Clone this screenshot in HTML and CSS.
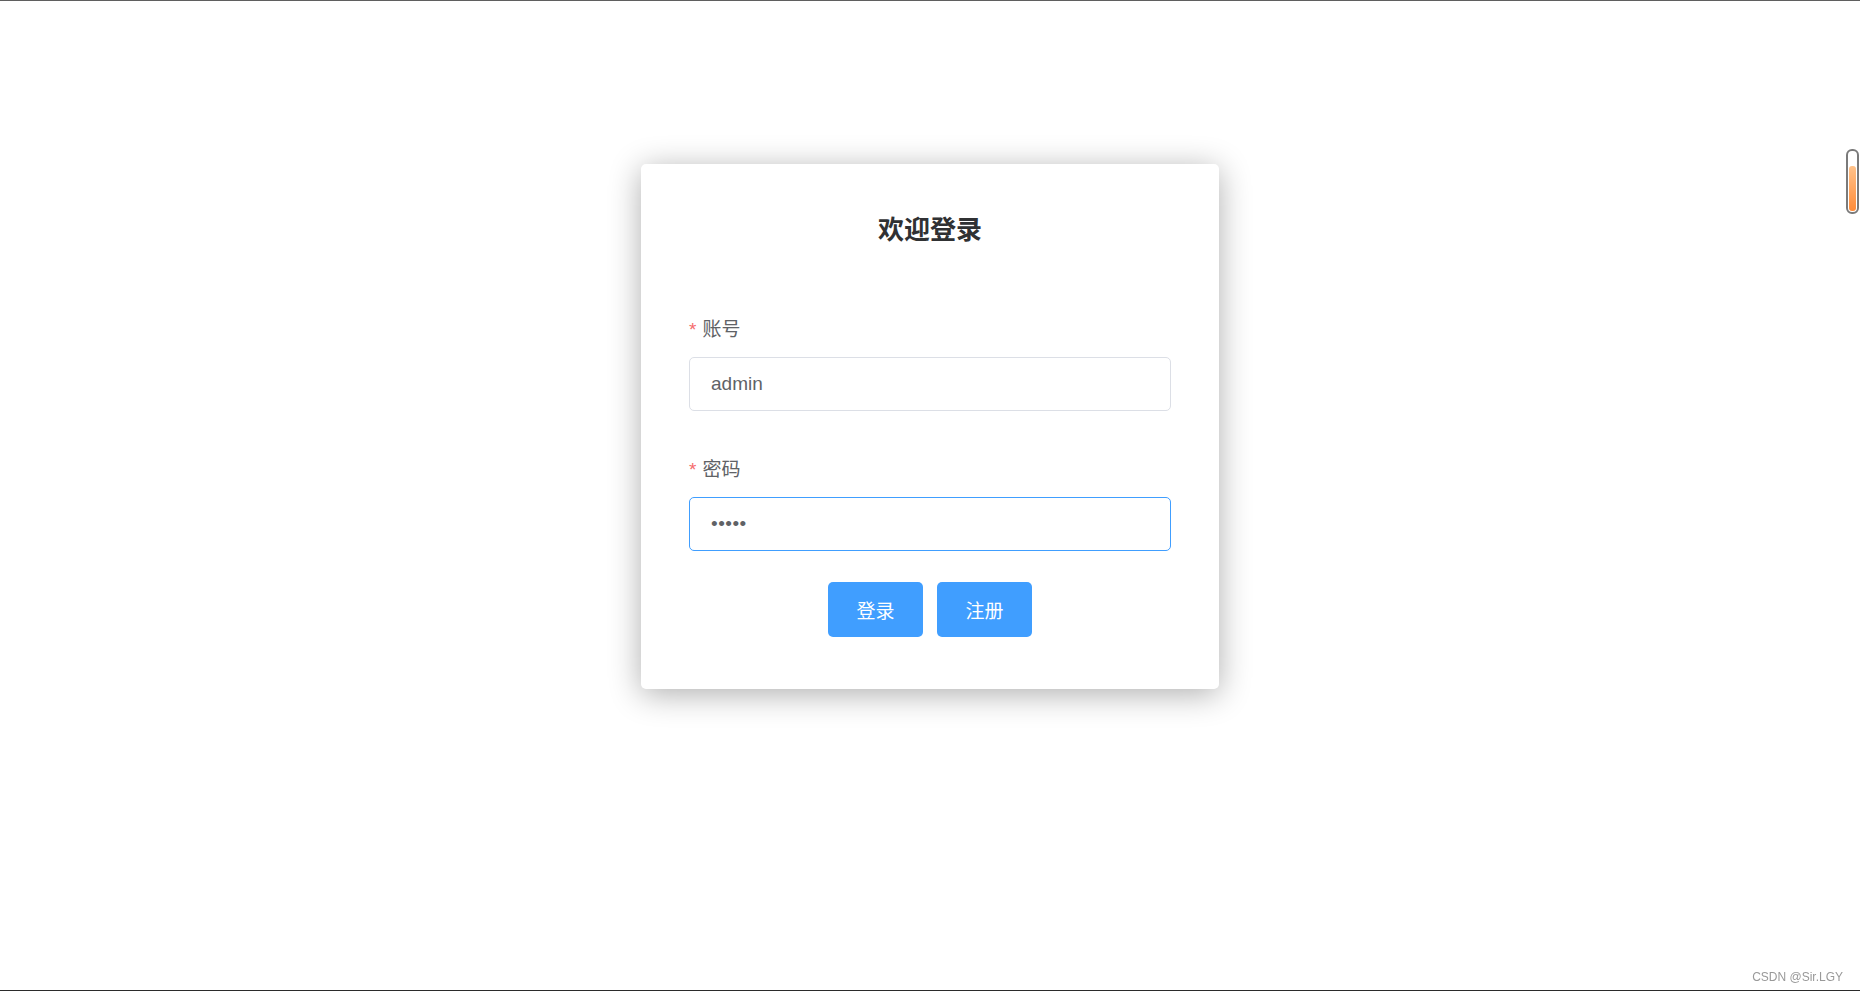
FILE: index.html
```html
<!DOCTYPE html>
<html lang="zh-CN">
<head>
    <meta charset="UTF-8">
    <meta name="viewport" content="width=device-width, initial-scale=1.0">
    <title>欢迎登录</title>
    <link rel="stylesheet" href="styles.css">
</head>
<body>
    <div class="page">
        <div class="login-card">
            <h3 class="login-title">欢迎登录</h3>
            <form class="login-form">
                <div class="form-item">
                    <label class="form-label" for="username">账号</label>
                    <input class="form-input" type="text" id="username" value="admin">
                </div>
                <div class="form-item form-item-last">
                    <label class="form-label" for="password">密码</label>
                    <input class="form-input is-focus" type="password" id="password" value="admin">
                </div>
                <div class="form-actions">
                    <button class="btn" type="button">登录</button>
                    <button class="btn" type="button">注册</button>
                </div>
            </form>
        </div>
    </div>

    <div class="side-gauge"><div class="side-gauge-fill"></div></div>
    <div class="watermark">CSDN @Sir.LGY</div>
</body>
</html>
```

FILE: styles.css
```css
html, body {
    height: 100%;
}
body {
    margin: 0;
    box-sizing: border-box;
    border-top: 1px solid #5f5f5f;
    border-bottom: 1px solid #2b2b2b;
    background-color: #fff;
    font-family: "Liberation Sans", "Noto Sans CJK SC", sans-serif;
}
.page {
    display: flex;
    justify-content: center;
    padding-top: 163px;
}
.login-card {
    width: 578px;
    box-sizing: border-box;
    padding: 48px 48px 52px;
    background-color: #fff;
    border-radius: 5px;
    box-shadow: 0 5px 32px rgba(0, 0, 0, 0.32);
}
.login-title {
    margin: 0;
    font-size: 26px;
    line-height: 36px;
    font-weight: bold;
    text-align: center;
    color: #303133;
}
.login-form {
    margin-top: 70px;
}
.form-item {
    margin-bottom: 47px;
}
.form-item-last {
    margin-bottom: 31px;
}
.form-label {
    display: block;
    margin-bottom: 15px;
    font-size: 19px;
    line-height: 24px;
    color: #606266;
}
.form-label::before {
    content: "*";
    color: #f56c6c;
    margin-right: 6px;
}
.form-input {
    display: block;
    width: 100%;
    height: 54px;
    box-sizing: border-box;
    padding: 0 21px;
    border: 1px solid #dcdfe6;
    border-radius: 5px;
    outline: none;
    font-family: "Liberation Sans", "Noto Sans CJK SC", sans-serif;
    font-size: 19px;
    color: #606266;
    background-color: #fff;
}
.form-input.is-focus {
    border-color: #409eff;
    letter-spacing: 0.5px;
}
.form-actions {
    display: flex;
    justify-content: center;
    gap: 14px;
}
.btn {
    width: 95px;
    height: 55px;
    border: none;
    border-radius: 5px;
    background-color: #409eff;
    color: #fff;
    font-family: "Liberation Sans", "Noto Sans CJK SC", sans-serif;
    font-size: 19px;
    cursor: pointer;
}
.side-gauge {
    position: fixed;
    top: 149px;
    right: 1px;
    width: 7px;
    height: 60px;
    border: 2px solid #7a7a7a;
    border-radius: 6px;
    background-color: #fff;
    display: flex;
    align-items: flex-end;
    padding: 0 1px 1px;
}
.side-gauge-fill {
    width: 100%;
    height: 45px;
    border-radius: 3px;
    background: linear-gradient(#ffc28a, #ff8c3a);
}
.watermark {
    position: fixed;
    right: 17px;
    bottom: 7px;
    font-family: "Liberation Sans", sans-serif;
    font-size: 12px;
    color: #999;
}
```
